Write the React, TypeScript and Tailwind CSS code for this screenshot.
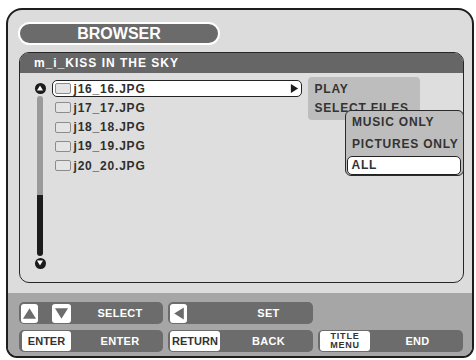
import clsx from "clsx";

const files = ["j16_16.JPG", "j17_17.JPG", "j18_18.JPG", "j19_19.JPG", "j20_20.JPG"];

function Tri({ dir, className }: { dir: "up" | "down" | "left" | "right"; className?: string }) {
  const pts = {
    up: "5,1 10,9 0,9",
    down: "0,1 10,1 5,9",
    left: "9,0 9,10 1,5",
    right: "1,0 1,10 9,5",
  }[dir];
  return (
    <svg viewBox="0 0 10 10" className={className}>
      <polygon points={pts} fill="currentColor" />
    </svg>
  );
}

function ScrollCap({ dir }: { dir: "up" | "down" }) {
  return (
    <span className="w-[11px] h-[11px] rounded-full bg-[#1b1b1b] flex items-center justify-center">
      <Tri dir={dir} className="w-[6px] h-[6px] text-white" />
    </span>
  );
}

function KeyBox({ className, children }: { className?: string; children: React.ReactNode }) {
  return (
    <span className={clsx("bg-white rounded-[3px] flex items-center justify-center text-[#333]", className)}>
      {children}
    </span>
  );
}

function Group({ keys, label, shift }: { keys: React.ReactNode; label: string; shift: string }) {
  return (
    <div className="h-[22px] rounded-[5px] bg-[#6c6c6c] flex items-center">
      <div className="w-[54px] flex items-center">{keys}</div>
      <span className={clsx("flex-1 text-center text-white text-[11px] tracking-[0.3px] leading-none", shift)}>
        {label}
      </span>
    </div>
  );
}

export default function App() {
  return (
    <div className="w-[476px] h-[360px] bg-white pt-[8px] pl-[6px] font-['Liberation_Sans',Arial,sans-serif] font-bold">
      <div className="w-[468px] h-[350px] border-2 border-[#1e1e1e] rounded-t-[16px] rounded-b-[11px] bg-[#dcdcdc] flex flex-col overflow-hidden">
        <div className="ml-[10px] mt-[12px] w-[202px] h-[23px] rounded-full bg-[#6b6b6b] border-2 border-white flex items-center justify-center text-white text-[16px] leading-none">
          BROWSER
        </div>

        <div className="relative ml-[11px] mt-[7px] w-[445px] h-[231px] border-[1.5px] border-[#262626] rounded-[10px] bg-[#dedede]">
          <div className="h-[20px] rounded-t-[8.5px] bg-[#666666] flex items-center pl-[14px] text-white text-[12px] tracking-[1px] leading-none">
            m_i_KISS IN THE SKY
          </div>

          <div className="flex items-start pl-[14px]">
            <div className="mt-[9.5px] w-[12px] flex flex-col items-center gap-[2px]">
              <ScrollCap dir="up" />
              <div className="w-[6px] h-[160px] rounded-full overflow-hidden flex flex-col">
                <div className="h-[99px] bg-[#9a9a9a]" />
                <div className="flex-1 bg-[#1c1c1c]" />
              </div>
              <ScrollCap dir="down" />
            </div>

            <div className="ml-[5.5px] pt-[6px]">
              {files.map((f, i) => (
                <div key={f} className="h-[19.25px] flex items-center">
                  <div
                    className={clsx(
                      "w-[250px] h-[17px] flex items-center pl-[2px] rounded-[5px] border-[1.5px]",
                      i === 0 ? "bg-white border-[#222]" : "border-transparent"
                    )}
                  >
                    <span className="w-[16px] h-[11px] rounded-[2px] border border-[#8c8c8c] bg-[#e4e4e4]" />
                    <span className="ml-[3px] text-[12px] tracking-[0.8px] text-[#2f2f2f] leading-none">{f}</span>
                    {i === 0 && <Tri dir="right" className="ml-auto mr-[2px] w-[9px] h-[9px] text-[#1b1b1b]" />}
                  </div>
                </div>
              ))}
            </div>
          </div>

          <div className="absolute left-[287.5px] top-[23.5px] w-[112px] h-[43px] rounded-[4px] bg-[#bdbdbd] pt-[2.5px] pl-[7px] text-[12px] tracking-[0.8px] text-[#333] leading-none">
            <div className="h-[19px] flex items-center">PLAY</div>
            <div className="h-[19px] flex items-center">SELECT FILES</div>
          </div>

          <div className="absolute left-[324.5px] top-[56.5px] w-[119px] h-[66px] border-[1.5px] border-[#2a2a2a] rounded-[6px] bg-[#bdbdbd] px-[1.5px] text-[12px] tracking-[0.8px] text-[#333] leading-none">
            <div className="h-[22px] flex items-center pl-[5px]">MUSIC ONLY</div>
            <div className="h-[22px] flex items-center pl-[5px]">PICTURES ONLY</div>
            <div className="h-[19px] mt-[1px] flex items-center pl-[3.5px] bg-white border-[1.5px] border-[#222] rounded-[5px]">
              ALL
            </div>
          </div>
        </div>

        <div className="mt-[10px] flex-1 bg-[#a6a6a6] pl-[11px] pt-[9px] grid grid-cols-[144px_145px_145px] grid-rows-[22px_22px] gap-x-[5px] gap-y-[6px]">
          <Group
            shift="pl-[4px]"
            label="SELECT"
            keys={
              <>
                <KeyBox className="ml-[2px] w-[17px] h-[19px]">
                  <Tri dir="up" className="w-[13px] h-[13px] text-[#6c6c6c]" />
                </KeyBox>
                <KeyBox className="ml-[14px] w-[19px] h-[19px]">
                  <Tri dir="down" className="w-[13px] h-[13px] text-[#6c6c6c]" />
                </KeyBox>
              </>
            }
          />
          <Group
            shift="pl-[2px]"
            label="SET"
            keys={
              <KeyBox className="ml-[2px] w-[17px] h-[19px]">
                <Tri dir="left" className="w-[12px] h-[13px] text-[#6c6c6c]" />
              </KeyBox>
            }
          />
          <div />
          <Group
            shift="pl-[4px]"
            label="ENTER"
            keys={<KeyBox className="ml-[3px] w-[49px] h-[20px] text-[11px] leading-none">ENTER</KeyBox>}
          />
          <Group
            shift="pl-[2px]"
            label="BACK"
            keys={<KeyBox className="ml-[2px] w-[50px] h-[20px] text-[11px] leading-none">RETURN</KeyBox>}
          />
          <Group
            shift="pl-0"
            label="END"
            keys={
              <KeyBox className="ml-[2px] w-[50px] h-[20px] flex-col text-[9px] leading-[9.5px] tracking-[0.8px]">
                <span>TITLE</span>
                <span>MENU</span>
              </KeyBox>
            }
          />
        </div>
      </div>
    </div>
  );
}
